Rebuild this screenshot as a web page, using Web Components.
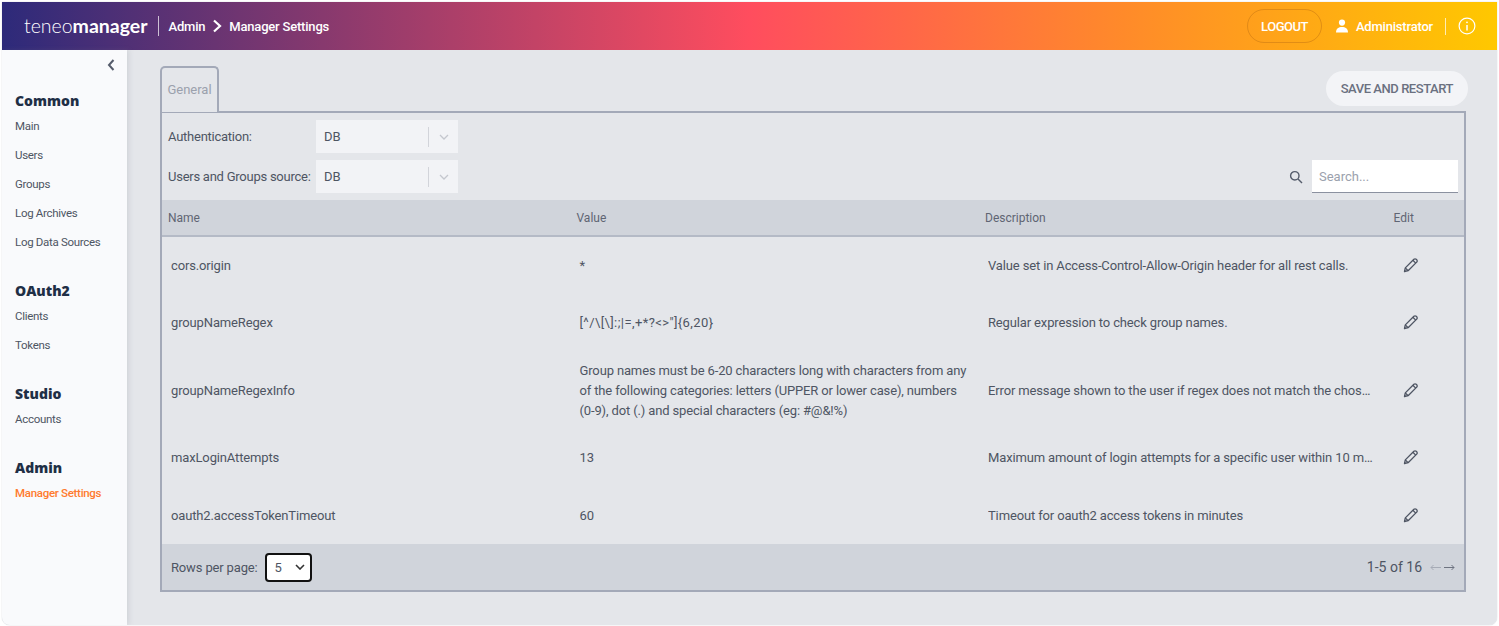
<!DOCTYPE html>
<html>
<head>
<meta charset="utf-8">
<title>Manager Settings</title>
<style>
  html, body { margin: 0; height: 100%; background: #fff; }
  body { font-family: Roboto, "Noto Sans", sans-serif; font-size: 13px; color: #4e5563; overflow: hidden; }
</style>
</head>
<body>
<app-shell>
  <top-bar slot="top"></top-bar>
  <side-nav slot="side">
    <nav-group title="Common">
      <nav-item>Main</nav-item>
      <nav-item>Users</nav-item>
      <nav-item>Groups</nav-item>
      <nav-item>Log Archives</nav-item>
      <nav-item>Log Data Sources</nav-item>
    </nav-group>
    <nav-group title="OAuth2">
      <nav-item>Clients</nav-item>
      <nav-item>Tokens</nav-item>
    </nav-group>
    <nav-group title="Studio">
      <nav-item>Accounts</nav-item>
    </nav-group>
    <nav-group title="Admin">
      <nav-item active>Manager Settings</nav-item>
    </nav-group>
  </side-nav>
  <settings-panel>
    <filter-row label="Authentication:"></filter-row>
    <filter-row label="Users and Groups source:" search></filter-row>
    <settings-table>
      <setting-row name="cors.origin" value="*" desc="Value set in Access-Control-Allow-Origin header for all rest calls."></setting-row>
      <setting-row spaced name="groupNameRegex" value="[^/\[\]:;|=,+*?<>&quot;]{6,20}" desc="Regular expression to check group names."></setting-row>
      <setting-row tall name="groupNameRegexInfo" value="Group names must be 6-20 characters long with characters from any of the following categories: letters (UPPER or lower case), numbers (0-9), dot (.) and special characters (eg: #@&!%)" desc="Error message shown to the user if regex does not match the chosen format."></setting-row>
      <setting-row name="maxLoginAttempts" value="13" desc="Maximum amount of login attempts for a specific user within 10 minutes."></setting-row>
      <setting-row name="oauth2.accessTokenTimeout" value="60" desc="Timeout for oauth2 access tokens in minutes"></setting-row>
    </settings-table>
  </settings-panel>
</app-shell>

<script>
customElements.define(
  "app-shell",
  class AppShell extends HTMLElement {
    constructor() {
      super();
      this.attachShadow({ mode: "open" });
      this.shadowRoot.innerHTML = `
      <style>
        :host {
          display: flex;
          flex-direction: column;
          box-sizing: border-box;
          height: 626px;
          padding: 2px 2px 1px 2px;
        }
        .frame {
          flex: 1;
          display: flex;
          flex-direction: column;
          overflow: hidden;
          border-radius: 0 0 8px 8px;
          box-shadow: 0 0 1px #9ea3ad;
        }
        .body { flex: 1; display: flex; min-height: 0; background: #e4e6ea; }
        main { flex: 1; padding: 16px 31px 0 33px; min-width: 0; }
      </style>
      <div class="frame">
        <slot name="top"></slot>
        <div class="body">
          <slot name="side"></slot>
          <main><slot></slot></main>
        </div>
      </div>
      `;
    }
  }
);

customElements.define(
  "top-bar",
  class TopBar extends HTMLElement {
    constructor() {
      super();
      this.attachShadow({ mode: "open" });
      this.shadowRoot.innerHTML = `
      <style>
        :host {
          display: flex;
          align-items: center;
          flex: none;
          height: 48px;
          padding: 0 21px 0 22px;
          color: #fff;
          background: linear-gradient(90deg, #2d2a7a 0%, #ff4d5e 50%, #ff8a2a 75%, #ffc800 100%);
        }
        .logo { font: 300 19.5px/1 Lato, sans-serif; }
        .logo b { font-weight: 700; }
        .sep { width: 1px; background: rgba(255,255,255,.7); }
        .logo + .sep { height: 20px; margin: 0 10px; }
        .crumb { display: flex; align-items: center; gap: 7px; font-size: 13px; font-weight: 500; letter-spacing: -0.2px; flex: 1; }
        .logout {
          box-sizing: border-box;
          height: 34px;
          padding: 0 13px;
          border: 1px solid rgba(200,120,20,.55);
          border-radius: 17px;
          font-size: 13px;
          font-weight: 500;
          letter-spacing: -0.5px;
          line-height: 33px;
        }
        .user { display: flex; align-items: center; gap: 7px; margin-left: 13px; font-size: 13px; font-weight: 500; letter-spacing: -0.2px; }
        .user + .sep { height: 17px; margin: 0 12px; }
        svg { display: block; }
      </style>
      <span class="logo">teneo<b>manager</b></span>
      <span class="sep"></span>
      <div class="crumb">
        <span>Admin</span>
        <svg width="10" height="14" viewBox="0 0 10 14" fill="none" stroke="#fff" stroke-width="2.2"><path d="M2 1.5L8 7l-6 5.5"/></svg>
        <span>Manager Settings</span>
      </div>
      <span class="logout">LOGOUT</span>
      <div class="user">
        <svg width="14" height="14" viewBox="0 0 14 14" fill="#fff"><circle cx="7" cy="3.6" r="3.1"/><path d="M1 13.5c0-3.6 2.6-5.4 6-5.4s6 1.8 6 5.4z"/></svg>
        <span>Administrator</span>
      </div>
      <span class="sep"></span>
      <svg width="18" height="18" viewBox="0 0 18 18" fill="none" stroke="#fff" stroke-width="1.2"><circle cx="9" cy="9" r="7.9"/><path d="M9 8v5.5" stroke-width="1.5"/><circle cx="9" cy="5.3" r=".9" fill="#fff" stroke="none"/></svg>
      `;
    }
  }
);

customElements.define(
  "side-nav",
  class SideNav extends HTMLElement {
    constructor() {
      super();
      this.attachShadow({ mode: "open" });
      this.shadowRoot.innerHTML = `
      <style>
        :host {
          display: block;
          flex: none;
          box-sizing: border-box;
          width: 125px;
          padding-top: 9px;
          background: #f9fafc;
          box-shadow: 2px 0 5px rgba(120,125,140,.18);
          position: relative;
        }
        .toggle { display: flex; justify-content: flex-end; padding-right: 12px; height: 32px; }
      </style>
      <div class="toggle">
        <svg width="8" height="12" viewBox="0 0 8 12" fill="none" stroke="#555c6b" stroke-width="2"><path d="M6.5 1L2 6l4.5 5"/></svg>
      </div>
      <slot></slot>
      `;
    }
  }
);

customElements.define(
  "nav-group",
  class NavGroup extends HTMLElement {
    constructor() {
      super();
      this.attachShadow({ mode: "open" });
      const title = this.getAttribute("title");
      this.shadowRoot.innerHTML = `
      <style>
        :host { display: block; padding-left: 13px; margin-bottom: 24px; }
        h3 {
          margin: 0 0 2px;
          font: 800 14px/19px "Open Sans", sans-serif;
          color: #1f2f46;
        }
      </style>
      <h3>${title}</h3>
      <slot></slot>
      `;
    }
  }
);

customElements.define(
  "nav-item",
  class NavItem extends HTMLElement {
    constructor() {
      super();
      this.attachShadow({ mode: "open" });
      this.shadowRoot.innerHTML = `
      <style>
        :host { display: block; font-size: 11.5px; letter-spacing: -0.3px; line-height: 29px; color: #4e5563; }
        :host([active]) { color: #ff7a2e; font-weight: 500; }
      </style>
      <slot></slot>
      `;
    }
  }
);

customElements.define(
  "settings-panel",
  class SettingsPanel extends HTMLElement {
    constructor() {
      super();
      this.attachShadow({ mode: "open" });
      this.shadowRoot.innerHTML = `
      <style>
        :host { display: block; }
        .head { display: flex; justify-content: space-between; align-items: flex-end; height: 45px; }
        .tab {
          box-sizing: border-box;
          width: 59px;
          height: 46px;
          margin-bottom: -1px;
          border: 2px solid #a3a9b8;
          border-bottom: 0;
          border-radius: 5px 5px 0 0;
          background: #e4e6ea;
          color: #9ba1ad;
          font-size: 13px;
          line-height: 43px;
          text-align: center;
          position: relative;
          z-index: 1;
        }
        .save {
          box-sizing: border-box;
          height: 35px;
          margin: 0 -2px 5px 0;
          padding: 0 15px;
          border-radius: 18px;
          background: #f3f4f7;
          color: #6a7080;
          font-size: 13px;
          font-weight: 500;
          letter-spacing: -0.45px;
          line-height: 35px;
        }
        .box {
          box-sizing: border-box;
          height: 481px;
          border: 2px solid #a3a9b8;
          padding-top: 7px;
          display: flex;
          flex-direction: column;
        }
      </style>
      <div class="head">
        <div class="tab">General</div>
        <div class="save">SAVE AND RESTART</div>
      </div>
      <div class="box"><slot></slot></div>
      `;
    }
  }
);

customElements.define(
  "filter-row",
  class FilterRow extends HTMLElement {
    constructor() {
      super();
      this.attachShadow({ mode: "open" });
      const label = this.getAttribute("label");
      const search = this.hasAttribute("search")
        ? `<svg class="lens" width="14" height="14" viewBox="0 0 14 14" fill="none" stroke="#555c6b" stroke-width="1.4"><circle cx="5.8" cy="5.8" r="4.2"/><path d="M9 9l4 4"/></svg>
           <div class="search">Search...</div>`
        : "";
      this.shadowRoot.innerHTML = `
      <style>
        :host { display: flex; align-items: center; height: 33px; margin-bottom: 7px; padding: 0 6px; font-size: 13px; }
        .label { width: 148px; white-space: nowrap; letter-spacing: -0.25px; }
        .select {
          display: flex;
          align-items: center;
          box-sizing: border-box;
          width: 142px;
          height: 33px;
          background: #f2f3f6;
          padding-left: 8px;
        }
        .select span { flex: 1; margin-top: -1px; }
        .select i { width: 1px; height: 20px; background: #d2d4da; }
        .select svg { margin: 0 9px 0 10px; }
        .lens { margin-left: auto; margin-right: 9px; }
        .search {
          box-sizing: border-box;
          width: 146px;
          height: 33px;
          padding-left: 7px;
          background: #fff;
          border-bottom: 1px solid #8b91a0;
          color: #9ba1ad;
          line-height: 34px;
        }
      </style>
      <span class="label">${label}</span>
      <div class="select">
        <span>DB</span><i></i>
        <svg width="10" height="6" viewBox="0 0 10 6" fill="none" stroke="#c4c7ce" stroke-width="1.3"><path d="M1 1l4 4 4-4"/></svg>
      </div>
      ${search}
      `;
    }
  }
);

customElements.define(
  "settings-table",
  class SettingsTable extends HTMLElement {
    constructor() {
      super();
      this.attachShadow({ mode: "open" });
      this.shadowRoot.innerHTML = `
      <style>
        :host { display: flex; flex-direction: column; flex: 1; }
        .head {
          display: grid;
          grid-template-columns: 408.5px 408.5px 408.5px 1fr;
          align-items: center;
          box-sizing: border-box;
          height: 37px;
          padding-left: 6px;
          background: #d0d4db;
          border-bottom: 2px solid #b4bac6;
          font-size: 12px;
          color: #5f6573;
        }
        .rows { flex: 1; }
        .foot {
          display: flex;
          align-items: center;
          height: 46px;
          padding: 0 9px 0 9px;
          background: #d0d4db;
          font-size: 13px;
        }
        .foot > span:first-child { letter-spacing: -0.15px; }
        .rpp {
          display: flex;
          align-items: center;
          justify-content: space-between;
          box-sizing: border-box;
          width: 47px;
          height: 29px;
          margin-left: 7px;
          padding: 0 5px 0 8px;
          background: #fff;
          border: 2px solid #111;
          border-radius: 4px;
        }
        .count { margin-left: auto; font-size: 14px; }
        .arrows { display: flex; gap: 3px; margin-left: 8px; }
      </style>
      <div class="head"><span>Name</span><span>Value</span><span>Description</span><span>Edit</span></div>
      <div class="rows"><slot></slot></div>
      <div class="foot">
        <span>Rows per page:</span>
        <div class="rpp">
          <span>5</span>
          <svg width="10" height="6" viewBox="0 0 10 6" fill="none" stroke="#333" stroke-width="1.6"><path d="M1 1l4 4 4-4"/></svg>
        </div>
        <span class="count">1-5 of 16</span>
        <div class="arrows">
          <svg width="11" height="7" viewBox="0 0 11 7" fill="none" stroke="#a6abb6"><path d="M11 3.5H1M3.5 1L1 3.5 3.5 6"/></svg>
          <svg width="11" height="7" viewBox="0 0 11 7" fill="none" stroke="#6d7380"><path d="M0 3.5h10M7.5 1L10 3.5 7.5 6"/></svg>
        </div>
      </div>
      `;
    }
  }
);

customElements.define(
  "setting-row",
  class SettingRow extends HTMLElement {
    constructor() {
      super();
      this.attachShadow({ mode: "open" });
      const row = this.shadowRoot;
      row.innerHTML = `
      <style>
        :host {
          display: grid;
          grid-template-columns: 408.5px 408.5px 408.5px 1fr;
          align-items: center;
          box-sizing: border-box;
          height: 57.5px;
          padding-left: 9px;
          font-size: 13px;
          letter-spacing: -0.14px;
          line-height: 20px;
        }
        :host([tall]) { height: 77px; }
        :host(:last-of-type) { padding-top: 1px; }
        :host([spaced]) .value { letter-spacing: 0.4px; }
        .value { padding-right: 14px; }
        .desc { overflow: hidden; white-space: nowrap; text-overflow: ellipsis; padding-right: 21px; }
        svg { display: block; margin: -2px 0 0 6px; }
      </style>
      <span class="name"></span>
      <span class="value"></span>
      <span class="desc"></span>
      <svg width="16" height="16" viewBox="0 0 16 16" fill="none" stroke="#4e5563" stroke-width="1.3" stroke-linejoin="round"><path d="M1.5 14.5l.8-3.6 8.6-8.6a1.6 1.6 0 0 1 2.3 0l.5.5a1.6 1.6 0 0 1 0 2.3l-8.6 8.6z"/><path d="M2.3 10.9l2.8 2.8M9.9 3.3l2.8 2.8"/></svg>
      `;
      row.querySelector(".name").textContent = this.getAttribute("name");
      row.querySelector(".value").textContent = this.getAttribute("value");
      row.querySelector(".desc").textContent = this.getAttribute("desc");
    }
  }
);
</script>
</body>
</html>
